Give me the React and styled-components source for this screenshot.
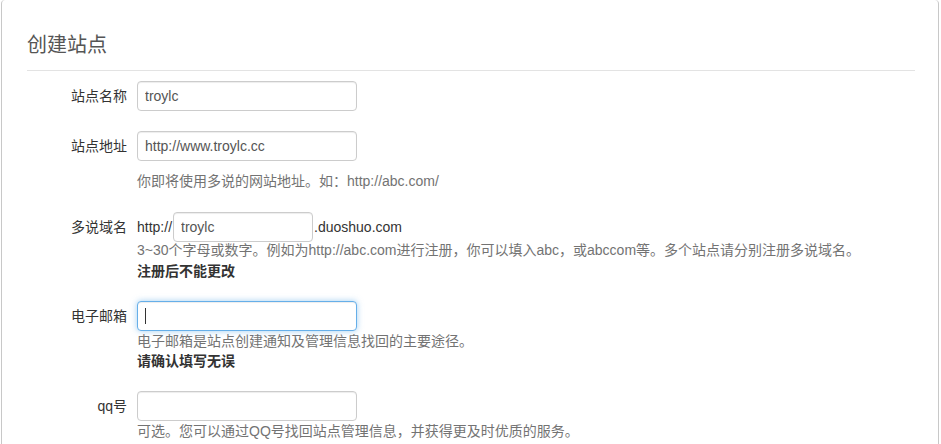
import React from 'react';
import styled, { createGlobalStyle, css } from 'styled-components';

const GlobalStyle = createGlobalStyle`
  html, body {
    margin: 0;
    padding: 0;
    background: #fff;
  }
  body {
    font-family: "Liberation Sans", "Noto Sans CJK SC", sans-serif;
    font-size: 14px;
    color: #333;
  }
`;

const Page = styled.div`
  padding: 0 2px 0 1px;
  height: 444px;
  overflow: hidden;
`;

const Panel = styled.div`
  box-sizing: border-box;
  width: 938px;
  min-height: 460px;
  border: 1px solid #c8c8c8;
  border-top: none;
  border-radius: 4px 4px 0 0;
  padding: 33px 23px 0 25px;
`;

const Title = styled.h2`
  margin: 0;
  font-size: 20px;
  line-height: 24px;
  font-weight: normal;
  color: #555;
`;

const Divider = styled.hr`
  margin: 13px 0 10px;
  border: 0;
  border-top: 1px solid #e3e3e3;
`;

const Row = styled.div`
  display: grid;
  grid-template-columns: 100px 1fr;
  column-gap: 10px;
  margin-bottom: ${p => p.$gap || 20}px;
`;

const Label = styled.label`
  text-align: right;
  line-height: 30px;
  height: 30px;
  color: #333;
  white-space: nowrap;
`;

const Field = styled.div`
  display: flex;
  flex-direction: column;
  align-items: flex-start;
`;

const InputWrap = styled.div`
  position: relative;
`;

const Input = styled.input`
  display: block;
  box-sizing: border-box;
  width: ${p => p.$width || 220}px;
  height: 30px;
  padding: 0 7px;
  font-family: inherit;
  font-size: 14px;
  color: #555;
  background: #fff;
  border: 1px solid #ccc;
  border-radius: 4px;
  box-shadow: inset 0 1px 1px rgba(0, 0, 0, 0.075);
  outline: none;
  caret-color: transparent;

  ${p => p.$focused && css`
    border-color: #66afe9;
    box-shadow: inset 0 1px 1px rgba(0, 0, 0, 0.075), 0 0 6px rgba(102, 175, 233, 0.6);
  `}
`;

const Caret = styled.span`
  position: absolute;
  left: 8px;
  top: 7px;
  width: 1px;
  height: 16px;
  background: #333;
  pointer-events: none;
`;

const Inline = styled.div`
  display: flex;
  align-items: center;
  height: 30px;
  color: #333;
  gap: 1px;
`;

const Help = styled.div`
  margin-top: ${p => p.$top || 0}px;
  line-height: ${p => p.$lh || 20}px;
  color: #737373;
  white-space: nowrap;
`;

const Strong = styled.div`
  line-height: ${p => p.$lh || 20}px;
  font-weight: bold;
  color: #333;
`;

export default function App() {
  return (
    <Page>
      <GlobalStyle />
      <Panel>
        <Title>创建站点</Title>
        <Divider />

        <Row>
          <Label>站点名称</Label>
          <Field>
            <Input type="text" defaultValue="troylc" />
          </Field>
        </Row>

        <Row $gap={21}>
          <Label>站点地址</Label>
          <Field>
            <Input type="text" defaultValue="http://www.troylc.cc" />
            <Help $top={10}>你即将使用多说的网站地址。如：http://abc.com/</Help>
          </Field>
        </Row>

        <Row $gap={19}>
          <Label>多说域名</Label>
          <Field>
            <Inline>
              <span>http://</span>
              <Input type="text" $width={140} defaultValue="troylc" />
              <span>.duoshuo.com</span>
            </Inline>
            <Help $top={-2} $lh={21}>
              3~30个字母或数字。例如为http://abc.com进行注册，你可以填入abc，或abccom等。多个站点请分别注册多说域名。
            </Help>
            <Strong $lh={21}>注册后不能更改</Strong>
          </Field>
        </Row>

        <Row>
          <Label>电子邮箱</Label>
          <Field>
            <InputWrap>
              <Input type="email" $focused />
              <Caret />
            </InputWrap>
            <Help>电子邮箱是站点创建通知及管理信息找回的主要途径。</Help>
            <Strong>请确认填写无误</Strong>
          </Field>
        </Row>

        <Row>
          <Label>qq号</Label>
          <Field>
            <Input type="text" />
            <Help>可选。您可以通过QQ号找回站点管理信息，并获得更及时优质的服务。</Help>
          </Field>
        </Row>
      </Panel>
    </Page>
  );
}
